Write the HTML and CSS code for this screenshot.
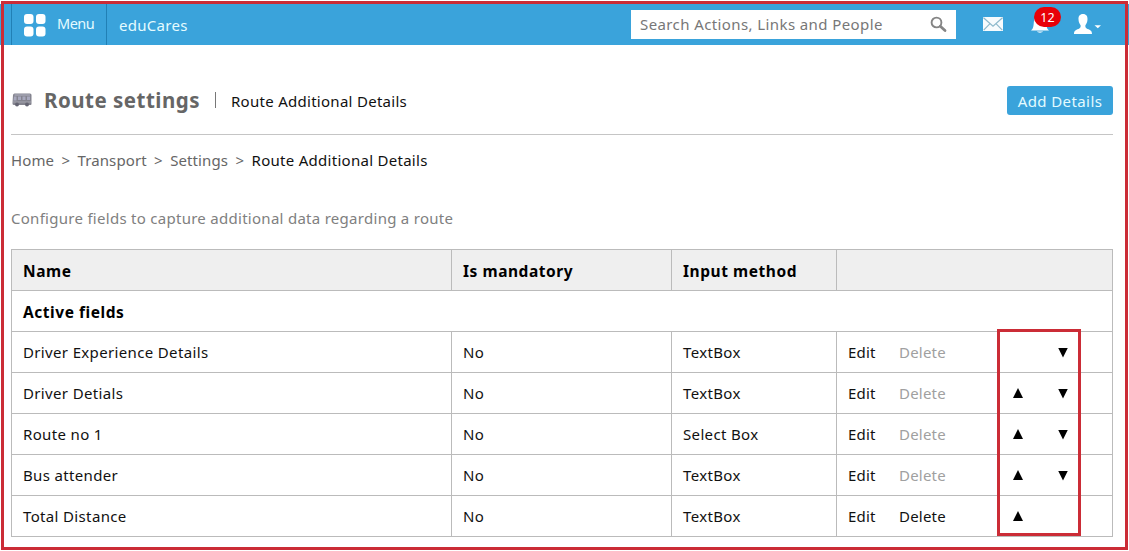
FILE: index.html
```html
<!DOCTYPE html>
<html lang="en">
<head>
<meta charset="utf-8">
<title>Route Additional Details</title>
<link rel="stylesheet" href="styles.css">
</head>
<body>
<div class="page">
  <header class="topbar">
    <a class="menu"><svg class="menu-icon" width="22" height="23" viewBox="0 0 22 23"><g fill="#fff"><rect width="9.500" height="10" rx="3"/><rect x="12" width="9.500" height="10" rx="3"/><rect y="12.500" width="9.500" height="10" rx="3"/><rect x="12" y="12.500" width="9.500" height="10" rx="3"/></g></svg><span class="menu-label">Menu</span></a>
    <span class="brand">eduCares</span>
    <div class="search"><span class="search-text">Search Actions, Links and People</span><svg class="search-icon" width="17" height="17" viewBox="0 0 17 17" fill="none" stroke="#858585"><circle cx="6.500" cy="6.500" r="4.900" stroke-width="1.900"/><path d="M10.300 10.300l4.700 4.200" stroke-width="2.800" stroke-linecap="round"/></svg></div>
    <svg class="mail" width="20" height="14" viewBox="0 0 20 14"><rect width="20" height="14" rx=".6" fill="#f7fbfd"/><path d="M.5.700L10 9.300 19.500.700M.7 13.200L7 6.700M19.300 13.200L13 6.700" fill="none" stroke="#8db9cc" stroke-width="1.200"/></svg>
    <div class="bell"><svg width="20" height="20" viewBox="0 0 20 20" fill="#fff"><path d="M1 17.500c2.500-2 2.500-4.500 2.800-8C4.200 5 6.500 3 10 3s5.800 2 6.200 6.500c.3 3.500.3 6 2.800 8zM7 18.500h6c-.7 1.500-5.300 1.500-6 0z"/></svg><span class="badge">12</span></div>
    <svg class="user" width="28" height="21" viewBox="0 0 28 21" fill="#fff"><path d="M9 0c3.300 0 4.700 2.300 4.500 5.300-.1 2.800-1 4.500-2.100 5.900-.3 2 .3 3 2.100 3.700 3 1 4.500 1.800 4.500 5.100H0c0-3.300 1.500-4.100 4.500-5.100 1.800-.7 2.400-1.700 2.100-3.700C5.500 9.800 4.600 8.100 4.500 5.300 4.300 2.300 5.700 0 9 0z"/><path d="M20.500 11.200h6.500l-3.200 3z"/></svg>
  </header>
  <main class="content">
    <div class="title-row">
      <svg class="bus" width="20" height="14" viewBox="0 0 20 14"><path d="M2.500.500h15.500q1.500 0 1.500 1.500v9q0 1-1 1H2Q.500 12 .500 10.500L1 2Q1.200.500 2.500.500z" fill="#84848f"/><path d="M2.500 2h15.500" stroke="#b3b4c4"/><path d="M2 3.500h2.500v4H1.500zM6 3.500h3v3.500H6zM10.500 3.500h3v3.500h-3zM15 3.500h3v3.500h-3z" fill="#a7a8bd"/><path d="M1 9h18" stroke="#a4a4ae"/><circle cx="5" cy="11.500" r="2" fill="#646472"/><circle cx="15" cy="11.500" r="2" fill="#646472"/></svg>
      <h1 class="title">Route settings</h1>
      <span class="divider"></span>
      <span class="subtitle">Route Additional Details</span>
      <a class="button">Add Details</a>
    </div>
    <nav class="crumbs"><a>Home</a><span>&gt;</span><a>Transport</a><span>&gt;</span><a>Settings</a><span>&gt;</span><b>Route Additional Details</b></nav>
    <p class="hint">Configure fields to capture additional data regarding a route</p>
    <table class="fields">
      <colgroup><col class="col-name"><col class="col-mandatory"><col class="col-method"><col class="col-actions"></colgroup>
      <tr class="head"><th>Name</th><th>Is mandatory</th><th>Input method</th><th></th></tr>
      <tr><th colspan="4">Active fields</th></tr>
      <tr><td>Driver Experience Details</td><td>No</td><td>TextBox</td><td><div class="actions"><a>Edit</a><a class="off">Delete</a><i></i><i class="down"></i></div></td></tr>
      <tr><td>Driver Detials</td><td>No</td><td>TextBox</td><td><div class="actions"><a>Edit</a><a class="off">Delete</a><i class="up"></i><i class="down"></i></div></td></tr>
      <tr><td>Route no 1</td><td>No</td><td>Select Box</td><td><div class="actions"><a>Edit</a><a class="off">Delete</a><i class="up"></i><i class="down"></i></div></td></tr>
      <tr><td>Bus attender</td><td>No</td><td>TextBox</td><td><div class="actions"><a>Edit</a><a class="off">Delete</a><i class="up"></i><i class="down"></i></div></td></tr>
      <tr><td>Total Distance</td><td>No</td><td>TextBox</td><td><div class="actions"><a>Edit</a><a>Delete</a><i class="up"></i><i></i></div></td></tr>
    </table>
  </main>
  <div class="frame"></div>
  <div class="highlight"></div>
</div>
</body>
</html>
```
FILE: styles.css
```css
* { box-sizing: border-box; }
body { margin: 0; background: #fff; }
.page { position: relative; width: 1129px; height: 551px; overflow: hidden; padding-top: 4px; font: 15px/20px "Noto Sans", sans-serif; letter-spacing: .28px; color: #111; white-space: nowrap; }
.topbar { height: 41px; background: #3aa3db; display: flex; align-items: flex-start; padding-left: 11px; color: #e4fbff; }
.menu { width: 96px; height: 41px; display: flex; border-left: 1px solid #2180b5; border-right: 1px solid #2180b5; padding: 10px 0 0 12px; }
.menu-label { margin: -1px 0 0 11px; font-size: 14.5px; letter-spacing: -.5px; }
.brand { margin: 11px 0 0 12px; width: 512px; }
.search { width: 325px; height: 29px; margin-top: 6px; background: #fff; color: #777; padding: 5px 9px; display: flex; justify-content: space-between; line-height: 18px; }
.search-text { letter-spacing: .4px; }
.search-icon { margin-top: 1px; }
.mail { margin: 13px 0 0 27px; }
.bell { position: relative; margin: 9px 0 0 27px; width: 20px; height: 20px; }
.badge { position: absolute; left: 4px; top: -6px; width: 27px; height: 20px; border-radius: 10px; background: #e80008; color: #fff; font-size: 12.5px; line-height: 21px; text-align: center; letter-spacing: .2px; }
.user { margin: 10px 0 0 24px; }
.content { padding: 41px 16px 0 11px; }
.title-row { height: 49px; border-bottom: 1px solid #c5c5c5; display: flex; align-items: flex-start; }
.bus { margin: 7px 0 0 1px; }
.title { margin: 1px 0 0 12px; width: 171px; font-size: 20.5px; line-height: 27px; color: #666; letter-spacing: .5px; }
.divider { width: 1px; height: 16px; margin-top: 6px; background: #777; }
.subtitle { margin: 5px 0 0 15px; }
.button { margin-left: auto; width: 106px; height: 29px; background: #3aa3db; border-radius: 3px; color: #e4fbff; line-height: 30px; text-align: center; letter-spacing: .4px; }
.crumbs { display: flex; gap: 7.4px; margin-top: 15px; color: #666; letter-spacing: .1px; }
.crumbs b { font-weight: 400; color: #111; letter-spacing: .28px; }
.hint { margin: 38px 0 21px; color: #808080; }
.fields { width: 1102px; table-layout: fixed; border-collapse: separate; border-spacing: 0; border: solid #bbb; border-width: 1px 0 0 1px; }
.col-name { width: 440px; }
.col-mandatory { width: 220px; }
.col-method { width: 165px; }
.col-actions { width: 276px; }
.fields td, .fields th { height: 41px; padding: 0 0 0 11px; border: solid #bbb; border-width: 0 1px 1px 0; text-align: left; color: #111; }
.fields td { letter-spacing: .35px; }
.fields th { padding-top: 1px; color: #000; font-size: 15.5px; letter-spacing: .55px; }
.head th { background: #efefef; }
.actions { display: grid; grid-template-columns: 51px 114px 45px 45px; align-items: center; letter-spacing: .2px; }
.off { color: #a0a0a0; }
.up, .down { width: 10px; height: 10px; background: #000; }
.up { clip-path: polygon(50% 0, 100% 100%, 0 100%); }
.down { margin-top: 1px; clip-path: polygon(0 0, 100% 0, 50% 100%); }
.frame { position: absolute; left: 1px; top: 1px; width: 1127px; height: 549px; border: 3px solid #cb2c36; }
.highlight { position: absolute; left: 997px; top: 329px; width: 84px; height: 207px; border: 3px solid #cb2c36; }
```
